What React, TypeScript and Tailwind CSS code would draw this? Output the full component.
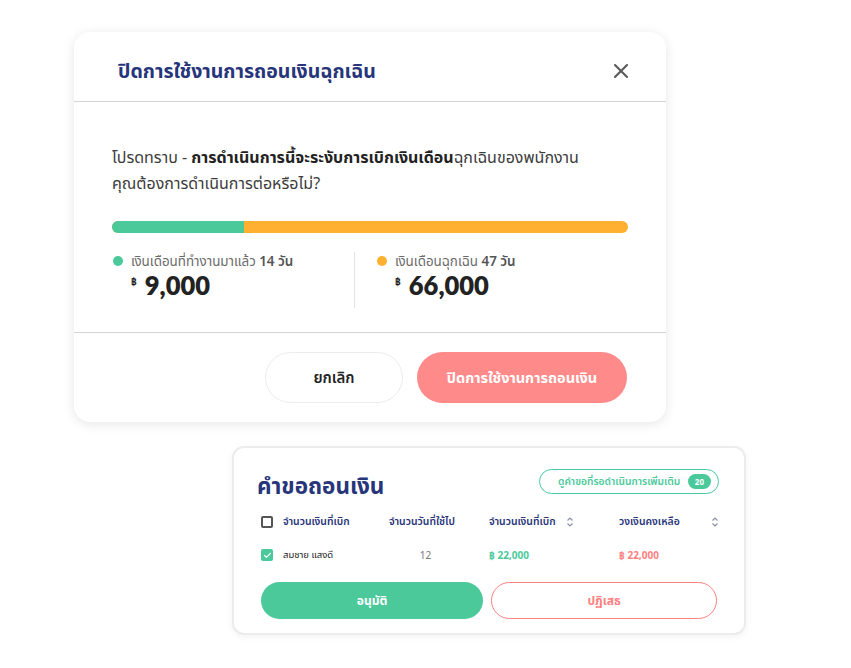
import { X, Check } from "lucide-react"

const font = { fontFamily: '"Noto Sans", "Noto Sans Thai", "Lato", sans-serif' }

function SortIcon() {
    return (
        <svg width="8" height="10" viewBox="0 0 8 10" fill="none" stroke="#8a90a8" strokeWidth="1.2">
            <path d="M1.5 3.5 L4 1 L6.5 3.5" />
            <path d="M1.5 6.5 L4 9 L6.5 6.5" />
        </svg>
    )
}

export default function App() {
    return (
        <div className="w-[851px] h-[668px] bg-white overflow-hidden" style={font}>
            {/* modal */}
            <div className="ml-[74px] mt-[32px] w-[592px] h-[390px] bg-white rounded-[16px] shadow-[0_2px_12px_rgba(0,0,0,0.10)] flex flex-col">
                <div className="h-[70px] flex items-center justify-between pl-[44px] pr-[33px] pt-[9px] border-b border-[#d4d4d8]">
                    <h2 className="text-[19.5px] font-bold text-[#27357a]">ปิดการใช้งานการถอนเงินฉุกเฉิน</h2>
                    <X size={24} strokeWidth={2.1} className="text-[#5a5a5a]" />
                </div>

                <div className="flex-1 px-[38px] pt-[42px] border-b border-[#d4d4d8]">
                    <p className="text-[16px] leading-[26px] text-[#3c3c3c]">
                        โปรดทราบ - <span className="font-bold text-[#222]">การดำเนินการนี้จะระงับการเบิกเงินเดือน</span>ฉุกเฉินของพนักงาน
                        <br />
                        คุณต้องการดำเนินการต่อหรือไม่?
                    </p>

                    <div className="mt-[25px] h-[12px] w-full rounded-full bg-[#ffb030] overflow-hidden flex">
                        <div className="w-[132px] h-full bg-[#4bc99b]" />
                    </div>

                    <div className="mt-[19px] flex">
                        <div className="w-[243px] border-r border-[#e4e4e7] h-[56px]">
                            <div className="flex items-center gap-[8px] pl-[1px] h-[18px]">
                                <span className="w-[10px] h-[10px] rounded-full bg-[#4bc99b]" />
                                <span className="text-[13.4px] leading-[18px] text-[#6b6b6b]">เงินเดือนที่ทำงานมาแล้ว <span className="font-semibold text-[#555]">14 วัน</span></span>
                            </div>
                            <div className="flex items-start pl-[19px]">
                                <span className="text-[10px] leading-[14px] font-bold text-[#222] mt-[4px]">฿</span>
                                <span className="ml-[8px] text-[25.5px] leading-[30px] font-extrabold text-[#222]" style={{ fontFamily: "Lato, sans-serif" }}>9,000</span>
                            </div>
                        </div>
                        <div className="pl-[22px]">
                            <div className="flex items-center gap-[8px] h-[18px]">
                                <span className="w-[10px] h-[10px] rounded-full bg-[#ffb030]" />
                                <span className="text-[13.4px] leading-[18px] text-[#6b6b6b]">เงินเดือนฉุกเฉิน <span className="font-semibold text-[#555]">47 วัน</span></span>
                            </div>
                            <div className="flex items-start pl-[18px]">
                                <span className="text-[10px] leading-[14px] font-bold text-[#222] mt-[4px]">฿</span>
                                <span className="ml-[8px] text-[25.5px] leading-[30px] font-extrabold text-[#222]" style={{ fontFamily: "Lato, sans-serif" }}>66,000</span>
                            </div>
                        </div>
                    </div>
                </div>

                <div className="h-[89px] flex justify-end items-start gap-[14px] pr-[39px] pt-[19px]">
                    <button className="w-[138px] h-[51px] rounded-full border border-[#ececec] bg-white text-[15px] font-semibold text-[#222]">ยกเลิก</button>
                    <button className="w-[210px] h-[51px] rounded-full bg-[#ff8a8a] text-[14.5px] font-bold text-white">ปิดการใช้งานการถอนเงิน</button>
                </div>
            </div>

            {/* request card */}
            <div className="ml-[232px] mt-[24px] w-[514px] h-[189px] bg-white rounded-[12px] border-2 border-[#ececec] shadow-[0_2px_6px_rgba(0,0,0,0.05)] pl-[27px] pr-[25px] pt-[21px]">
                <div className="flex items-start justify-between -ml-[4px]">
                    <h3 className="mt-[2px] text-[22.5px] leading-[30px] font-bold text-[#27357a]">คำขอถอนเงิน</h3>
                    <div className="w-[180px] h-[25px] rounded-full border border-[#4bc99b] flex items-center justify-between pl-[18px] pr-[7px]">
                        <span className="text-[10.2px] font-semibold text-[#4bc99b]">ดูคำขอที่รอดำเนินการเพิ่มเติม</span>
                        <span className="h-[15px] px-[7px] rounded-full bg-[#4bc99b] text-[8px] font-bold text-white flex items-center">20</span>
                    </div>
                </div>

                <div className="mt-[11px] flex items-center h-[20px] text-[10.4px] font-semibold text-[#27357a]">
                    <span className="w-[12px] h-[12px] border-2 border-[#555] rounded-[2px]" />
                    <span className="ml-[10px] w-[106px]">จำนวนเงินที่เบิก</span>
                    <span className="w-[100px]">จำนวนวันที่ใช้ไป</span>
                    <span className="w-[130px] flex items-center gap-[10px]">จำนวนเงินที่เบิก <SortIcon /></span>
                    <span className="flex-1 flex items-center justify-between">วงเงินคงเหลือ <SortIcon /></span>
                </div>

                <div className="mt-[13px] flex items-center h-[20px]">
                    <span className="w-[12px] h-[12px] rounded-[2px] bg-[#4bc99b] flex items-center justify-center">
                        <Check size={9} strokeWidth={3} className="text-white" />
                    </span>
                    <span className="ml-[10px] w-[106px] text-[9.5px] text-[#222]">สมชาย แสงดี</span>
                    <span className="w-[73px] text-[10px] text-[#777] text-center">12</span>
                    <span className="w-[27px]" />
                    <span className="w-[130px] text-[10px] font-bold text-[#4bc99b]">฿ 22,000</span>
                    <span className="flex-1 text-[10px] font-bold text-[#ff8080]">฿ 22,000</span>
                </div>

                <div className="mt-[17px] flex gap-[8px] -mx-[2px] pl-[2px]">
                    <button className="w-[222px] h-[37px] rounded-full bg-[#4bc99b] text-[12px] font-bold text-white">อนุมัติ</button>
                    <button className="w-[226px] h-[37px] rounded-full border border-[#ff8080] bg-white text-[12px] font-bold text-[#ff8080]">ปฏิเสธ</button>
                </div>
            </div>
        </div>
    )
}
